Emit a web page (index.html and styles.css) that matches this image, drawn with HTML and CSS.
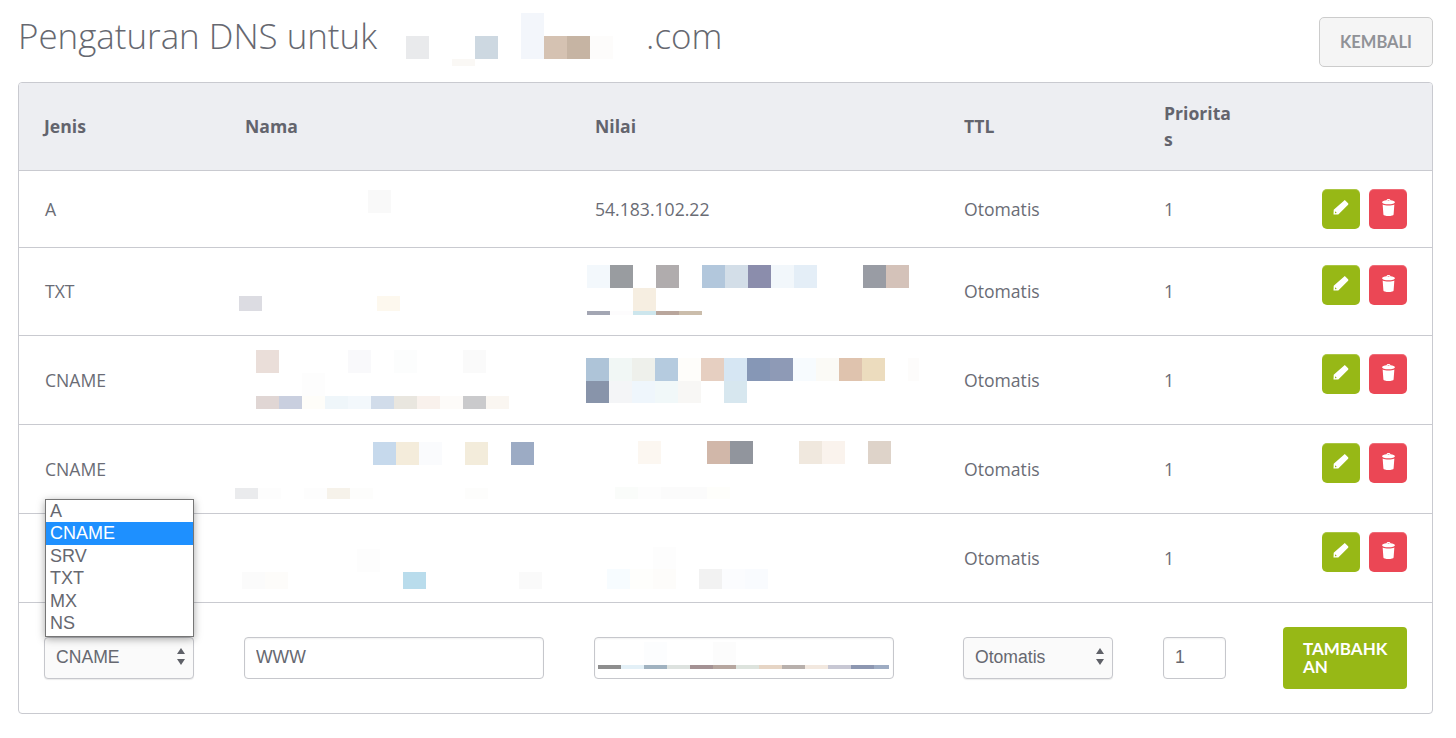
FILE: index.html
```html
<!DOCTYPE html>
<html lang="en">
<head>
  <meta charset="UTF-8" />
  <meta name="viewport" content="width=device-width, initial-scale=1.0" />
  <title>Pengaturan DNS</title>
  <link rel="stylesheet" href="styles.css">
</head>
<body>
  <div class="page-head">
    <h1>Pengaturan DNS untuk <span class="domain-gap"></span>.com</h1>
    <a class="btn-back" href="#">KEMBALI</a>
  </div>

  <div class="table-box">
    <table class="dns-table">
      <thead>
        <tr>
          <th class="col-type">Jenis</th>
          <th class="col-name">Nama</th>
          <th class="col-value">Nilai</th>
          <th class="col-ttl">TTL</th>
          <th class="col-prio">Prioritas</th>
          <th class="col-actions"></th>
        </tr>
      </thead>
      <tbody>
        <tr class="row-short">
          <td>A</td><td></td><td>54.183.102.22</td><td>Otomatis</td><td>1</td>
          <td class="actions">
            <button class="btn-icon edit"><svg viewBox="0 0 16 16"><use href="#i-pencil"/></svg></button>
            <button class="btn-icon del"><svg viewBox="0 0 16 16"><use href="#i-trash"/></svg></button>
          </td>
        </tr>
        <tr class="row-two">
          <td>TXT</td><td></td><td></td><td>Otomatis</td><td>1</td>
          <td class="actions">
            <button class="btn-icon edit"><svg viewBox="0 0 16 16"><use href="#i-pencil"/></svg></button>
            <button class="btn-icon del"><svg viewBox="0 0 16 16"><use href="#i-trash"/></svg></button>
          </td>
        </tr>
        <tr class="row-tall">
          <td>CNAME</td><td></td><td></td><td>Otomatis</td><td>1</td>
          <td class="actions">
            <button class="btn-icon edit"><svg viewBox="0 0 16 16"><use href="#i-pencil"/></svg></button>
            <button class="btn-icon del"><svg viewBox="0 0 16 16"><use href="#i-trash"/></svg></button>
          </td>
        </tr>
        <tr class="row-tall">
          <td>CNAME</td><td></td><td></td><td>Otomatis</td><td>1</td>
          <td class="actions">
            <button class="btn-icon edit"><svg viewBox="0 0 16 16"><use href="#i-pencil"/></svg></button>
            <button class="btn-icon del"><svg viewBox="0 0 16 16"><use href="#i-trash"/></svg></button>
          </td>
        </tr>
        <tr class="row-tall">
          <td>CNAME</td><td></td><td></td><td>Otomatis</td><td>1</td>
          <td class="actions">
            <button class="btn-icon edit"><svg viewBox="0 0 16 16"><use href="#i-pencil"/></svg></button>
            <button class="btn-icon del"><svg viewBox="0 0 16 16"><use href="#i-trash"/></svg></button>
          </td>
        </tr>
        <tr class="row-form">
          <td>
            <div class="select-wrap type-select">
              <select><option>A</option><option selected>CNAME</option><option>SRV</option><option>TXT</option><option>MX</option><option>NS</option></select>
              <svg class="select-arrows" viewBox="0 0 8 17"><path d="M4 0l4 6H0zM4 17L0 11h8z"/></svg>
              <ul class="select-menu">
                <li>A</li>
                <li class="active">CNAME</li>
                <li>SRV</li>
                <li>TXT</li>
                <li>MX</li>
                <li>NS</li>
              </ul>
            </div>
          </td>
          <td><input class="field" type="text" value="WWW" /></td>
          <td><input class="field" type="text" /></td>
          <td>
            <div class="select-wrap">
              <select><option>Otomatis</option></select>
              <svg class="select-arrows" viewBox="0 0 8 17"><path d="M4 0l4 6H0zM4 17L0 11h8z"/></svg>
            </div>
          </td>
          <td><input class="field prio-field" type="text" value="1" /></td>
          <td class="add-cell"><button class="btn-add">TAMBAHKAN</button></td>
        </tr>
      </tbody>
    </table>
  </div>

  <svg class="icon-defs" width="0" height="0">
    <symbol id="i-pencil" viewBox="0 0 16 16">
      <path fill-rule="evenodd" d="M11.800 1l3.300 3.300c.4.4.4 1 0 1.400L5.300 15.400.5 15.600l.2-4.800zM2.100 12.200l-.2 2 2-.2z"/>
    </symbol>
    <symbol id="i-trash" viewBox="0 0 16 16">
      <path fill-rule="evenodd" d="M8 .1c1 0 1.700.4 1.900 1 2.300.2 4.100.9 4.100 1.900 0 1.200-2.700 2-6 2S2 4.200 2 3c0-1 1.800-1.700 4.100-1.900C6.300.5 7 .1 8 .1zM8 1c-.5 0-.9.1-1 .4h2C8.900 1.100 8.500 1 8 1zM2.500 5.200C3.800 5.900 5.800 6.200 8 6.200s4.200-.3 5.500-1l-.7 9.300c-.1.900-2.200 1.400-4.800 1.400s-4.700-.5-4.800-1.400z"/>
    </symbol>
  </svg>

  <!-- blurred-out records, same mosaic as the screenshot -->
  <svg class="mosaic" width="1456" height="738" viewBox="0 0 1456 738">
    <rect x="406" y="36" width="23" height="23" fill="#e9eaec"/>
    <rect x="452" y="59" width="23" height="7" fill="#faf8f5"/>
    <rect x="475" y="36" width="23" height="23" fill="#cdd8e1"/>
    <rect x="521" y="13" width="23" height="46" fill="#f3f6fb"/>
    <rect x="544" y="36" width="23" height="23" fill="#d5c2b2"/>
    <rect x="567" y="36" width="23" height="23" fill="#c6b4a3"/>
    <rect x="590" y="36" width="23" height="23" fill="#fdfcfb"/>

    <rect x="368" y="190" width="23" height="23" fill="#f9f9f9"/>

    <rect x="239" y="296" width="23" height="15" fill="#dcdce2"/>
    <rect x="377" y="296" width="23" height="15" fill="#fdf8ee"/>
    <rect x="587" y="265" width="23" height="23" fill="#f3f8fc"/>
    <rect x="610" y="265" width="23" height="23" fill="#999ca0"/>
    <rect x="656" y="265" width="23" height="23" fill="#b0acad"/>
    <rect x="702" y="265" width="23" height="23" fill="#b2c7dc"/>
    <rect x="725" y="265" width="23" height="23" fill="#d3dee8"/>
    <rect x="748" y="265" width="23" height="23" fill="#8b8dac"/>
    <rect x="771" y="265" width="23" height="23" fill="#f2f7fb"/>
    <rect x="794" y="265" width="23" height="23" fill="#e4eef7"/>
    <rect x="863" y="265" width="23" height="23" fill="#999ca4"/>
    <rect x="886" y="265" width="23" height="23" fill="#d4c2b9"/>
    <rect x="633" y="288" width="23" height="23" fill="#f6eee1"/>
    <rect x="587" y="311" width="23" height="4" fill="#a3a6b3"/>
    <rect x="610" y="311" width="23" height="4" fill="#fdfcfd"/>
    <rect x="633" y="311" width="23" height="4" fill="#cde6ed"/>
    <rect x="656" y="311" width="23" height="4" fill="#b9a69c"/>
    <rect x="679" y="311" width="23" height="4" fill="#cbbdab"/>

    <rect x="256" y="350" width="23" height="23" fill="#eaded9"/>
    <rect x="348" y="350" width="23" height="23" fill="#f9f9fb"/>
    <rect x="394" y="350" width="23" height="23" fill="#fcfdfd"/>
    <rect x="463" y="350" width="23" height="23" fill="#fafafa"/>
    <rect x="302" y="373" width="23" height="23" fill="#fdfdfd"/>
    <rect x="256" y="396" width="23" height="13" fill="#e0d6d4"/>
    <rect x="279" y="396" width="23" height="13" fill="#c9cfdf"/>
    <rect x="302" y="396" width="23" height="13" fill="#fefdf9"/>
    <rect x="325" y="396" width="23" height="13" fill="#eff6fa"/>
    <rect x="348" y="396" width="23" height="13" fill="#f3f8fc"/>
    <rect x="371" y="396" width="23" height="13" fill="#d1dcea"/>
    <rect x="394" y="396" width="23" height="13" fill="#e9e6df"/>
    <rect x="417" y="396" width="23" height="13" fill="#f9f1ec"/>
    <rect x="440" y="396" width="23" height="13" fill="#fdfbf9"/>
    <rect x="463" y="396" width="23" height="13" fill="#cacacc"/>
    <rect x="486" y="396" width="23" height="13" fill="#faf6f1"/>
    <rect x="586" y="358" width="23" height="23" fill="#aec4d8"/>
    <rect x="609" y="358" width="23" height="23" fill="#f1f7f5"/>
    <rect x="632" y="358" width="23" height="23" fill="#eef0eb"/>
    <rect x="655" y="358" width="23" height="23" fill="#b5cbdf"/>
    <rect x="678" y="358" width="23" height="23" fill="#fefdfa"/>
    <rect x="701" y="358" width="23" height="23" fill="#e6cfc1"/>
    <rect x="724" y="358" width="23" height="23" fill="#d6e6f3"/>
    <rect x="747" y="358" width="23" height="23" fill="#8697b6"/>
    <rect x="770" y="358" width="23" height="23" fill="#8e9ab6"/>
    <rect x="793" y="358" width="23" height="23" fill="#f7fbfe"/>
    <rect x="816" y="358" width="23" height="23" fill="#fbfaf6"/>
    <rect x="839" y="358" width="23" height="23" fill="#dfc3ae"/>
    <rect x="862" y="358" width="23" height="23" fill="#ecdcbe"/>
    <rect x="908" y="358" width="11" height="23" fill="#fdfcfb"/>
    <rect x="586" y="381" width="23" height="22" fill="#8894aa"/>
    <rect x="609" y="381" width="23" height="22" fill="#f4f5f7"/>
    <rect x="632" y="381" width="23" height="22" fill="#eff6fc"/>
    <rect x="655" y="381" width="23" height="22" fill="#f1f8f9"/>
    <rect x="678" y="381" width="23" height="22" fill="#f8f7f5"/>
    <rect x="724" y="381" width="23" height="22" fill="#d7e7ef"/>

    <rect x="373" y="442" width="23" height="23" fill="#c6d9ec"/>
    <rect x="396" y="442" width="23" height="23" fill="#f4ecdb"/>
    <rect x="419" y="442" width="23" height="23" fill="#fafbfd"/>
    <rect x="465" y="442" width="23" height="23" fill="#f3ecdb"/>
    <rect x="511" y="442" width="23" height="23" fill="#9cabc4"/>
    <rect x="235" y="488" width="23" height="11" fill="#eaebed"/>
    <rect x="258" y="488" width="23" height="11" fill="#fdfdfd"/>
    <rect x="304" y="488" width="23" height="11" fill="#fdfdfd"/>
    <rect x="327" y="488" width="23" height="11" fill="#f6f2ea"/>
    <rect x="350" y="488" width="23" height="11" fill="#fdfdfc"/>
    <rect x="465" y="488" width="23" height="11" fill="#fdfdfc"/>
    <rect x="638" y="441" width="23" height="23" fill="#fcf7f1"/>
    <rect x="707" y="441" width="23" height="23" fill="#d1b7a9"/>
    <rect x="730" y="441" width="23" height="23" fill="#91959d"/>
    <rect x="799" y="441" width="23" height="23" fill="#f0e8de"/>
    <rect x="822" y="441" width="23" height="23" fill="#faf3ed"/>
    <rect x="868" y="441" width="23" height="23" fill="#ded3c9"/>
    <rect x="615" y="487" width="23" height="12" fill="#fafcfa"/>
    <rect x="638" y="487" width="23" height="12" fill="#fdfdfd"/>
    <rect x="661" y="487" width="46" height="12" fill="#fbfbfb"/>
    <rect x="707" y="487" width="23" height="12" fill="#fefefb"/>

    <rect x="357" y="549" width="23" height="23" fill="#fdfdfd"/>
    <rect x="242" y="572" width="23" height="17" fill="#fbfbfb"/>
    <rect x="265" y="572" width="23" height="17" fill="#fdfcfa"/>
    <rect x="403" y="572" width="23" height="17" fill="#b9dcec"/>
    <rect x="519" y="572" width="23" height="17" fill="#fafafa"/>
    <rect x="607" y="569" width="23" height="20" fill="#f7fcff"/>
    <rect x="630" y="569" width="23" height="20" fill="#fefefc"/>
    <rect x="653" y="569" width="23" height="20" fill="#fdfcfa"/>
    <rect x="653" y="547" width="23" height="22" fill="#fdfdfd"/>
    <rect x="699" y="569" width="23" height="20" fill="#f2f2f2"/>
    <rect x="722" y="569" width="23" height="20" fill="#fbfcfe"/>
    <rect x="745" y="569" width="23" height="20" fill="#f9fbfe"/>

    <rect x="644" y="642" width="23" height="23" fill="#fcfdfe"/>
    <rect x="713" y="642" width="23" height="23" fill="#fcfcfc"/>
    <rect x="598" y="665" width="23" height="4" fill="#8e8e8e"/>
    <rect x="621" y="665" width="23" height="4" fill="#e3f0f7"/>
    <rect x="644" y="665" width="23" height="4" fill="#a0b2c0"/>
    <rect x="667" y="665" width="23" height="4" fill="#dde2df"/>
    <rect x="690" y="665" width="23" height="4" fill="#a49294"/>
    <rect x="713" y="665" width="23" height="4" fill="#b6a69f"/>
    <rect x="736" y="665" width="23" height="4" fill="#dde3dd"/>
    <rect x="759" y="665" width="23" height="4" fill="#e6d5c5"/>
    <rect x="782" y="665" width="23" height="4" fill="#b8b0ac"/>
    <rect x="805" y="665" width="23" height="4" fill="#f2e8df"/>
    <rect x="828" y="665" width="23" height="4" fill="#c8c8d4"/>
    <rect x="851" y="665" width="23" height="4" fill="#8d97b1"/>
    <rect x="874" y="665" width="15" height="4" fill="#9eacc3"/>
  </svg>
</body>
</html>
```

FILE: styles.css
```css
html, body {
  margin: 0;
  padding: 0;
  height: 738px;
  overflow: hidden;
  background-color: #fff;
}
body {
  position: relative;
  padding: 0 23px 0 18px;
  font-family: "Open Sans", Arial, sans-serif;
  font-size: 17.6px;
  color: #6a6c75;
}
.page-head {
  display: flex;
  justify-content: space-between;
  align-items: flex-start;
  height: 82px;
  padding-top: 17px;
  box-sizing: border-box;
}
.page-head h1 {
  margin: 0;
  font-size: 34.9px;
  font-weight: 300;
  line-height: 37px;
  color: #666870;
  white-space: nowrap;
}
.domain-gap {
  display: inline-block;
  width: 260px;
}
.btn-back {
  display: flex;
  align-items: center;
  justify-content: center;
  box-sizing: border-box;
  width: 114px;
  height: 50px;
  border: 1px solid #ccc;
  border-radius: 5px;
  background-color: #f5f5f5;
  font-family: Lato, Arial, sans-serif;
  font-size: 16.5px;
  font-weight: 700;
  color: #909297;
  text-decoration: none;
}
.table-box {
  border: 1px solid #c9cad0;
  border-radius: 4px;
  height: 632px;
  box-sizing: border-box;
}
.dns-table {
  width: 100%;
  table-layout: fixed;
  border-collapse: collapse;
}
.dns-table th, .dns-table td {
  box-sizing: border-box;
  padding: 0 24px 0 26px;
}
.dns-table th:first-child { padding-left: 25px; }
.col-type { width: 200px; }
.col-name { width: 350px; }
.col-value { width: 369px; }
.col-ttl { width: 200px; }
.col-prio { width: 119px; }
.dns-table th {
  height: 87px;
  text-align: left;
  font-weight: 700;
  line-height: 26px;
  color: #63646d;
  background-color: #edeef2;
  word-break: break-all;
  border-bottom: 1px solid #c9cad0;
}
.dns-table th:first-child { border-top-left-radius: 3px; }
.dns-table th:last-child { border-top-right-radius: 3px; }
.dns-table td {
  vertical-align: middle;
  border-bottom: 1px solid #c9cad0;
}
.dns-table tr:last-child td { border-bottom: 0; }
.row-short td { height: 77px; }
.row-two td { height: 88px; }
.row-tall td { height: 89px; }
.dns-table .row-form td {
  height: 111px;
  padding-left: 25px;
}
.dns-table td.actions {
  padding: 18px 25px 0 0;
  vertical-align: top;
  text-align: right;
}
.dns-table .row-two td.actions { padding-top: 17px; }
.btn-icon {
  display: inline-flex;
  align-items: center;
  justify-content: center;
  width: 38px;
  height: 40px;
  margin-left: 4.4px;
  padding: 0 0 3px;
  border: 0;
  border-radius: 5px;
  vertical-align: top;
  box-shadow: inset 0 1px 0 rgba(255,255,255,0.2);
}
.btn-icon svg {
  width: 16px;
  height: 16px;
  fill: #fff;
}
.btn-icon.edit { background-color: #97b816; }
.btn-icon.del { background-color: #eb4755; }
.btn-icon.del svg {
  width: 17px;
  height: 17px;
}
.field, .select-wrap select {
  box-sizing: border-box;
  width: 300px;
  height: 42px;
  padding: 0 11px;
  border: 1px solid #c6c7cc;
  border-radius: 4px;
  font-family: "Liberation Sans", Arial, sans-serif;
  font-size: 17.6px;
  color: #666870;
  outline: none;
  box-shadow: inset 0 1px 2px rgba(0,0,0,0.06);
}
.prio-field { width: 63px; }
.select-wrap {
  position: relative;
  width: 150px;
}
.select-wrap select {
  width: 100%;
  padding-bottom: 2px;
  appearance: none;
  -webkit-appearance: none;
  background-color: #fafafa;
  box-shadow: 0 1px 1px rgba(0,0,0,0.08);
}
.select-arrows {
  position: absolute;
  top: 11px;
  right: 9px;
  width: 8px;
  height: 17px;
  fill: #5f6168;
}
.select-menu {
  position: absolute;
  left: 1px;
  bottom: 42px;
  box-sizing: border-box;
  width: 149px;
  height: 138px;
  margin: 0;
  padding: 0;
  list-style: none;
  background-color: #fff;
  border: 1px solid #767676;
  box-shadow: 0 2px 8px rgba(0,0,0,0.35);
  font-family: "Liberation Sans", Arial, sans-serif;
  font-size: 18px;
  line-height: 22.5px;
  color: #666870;
}
.select-menu li { padding-left: 4px; }
.select-menu li.active {
  background-color: #1e90ff;
  color: #fff;
}
.dns-table .row-form td.add-cell {
  padding: 0 25px 0 0;
  text-align: right;
}
.btn-add {
  box-sizing: border-box;
  width: 124px;
  height: 62px;
  padding: 0 16px 0 20px;
  border: 0;
  border-radius: 4px;
  background-color: #97b816;
  font-family: Lato, Arial, sans-serif;
  font-size: 17px;
  font-weight: 700;
  line-height: 18px;
  color: #fff;
  text-align: left;
  word-break: break-all;
}
.icon-defs {
  position: absolute;
}
.mosaic {
  position: absolute;
  left: 0;
  top: 0;
  pointer-events: none;
}
```
